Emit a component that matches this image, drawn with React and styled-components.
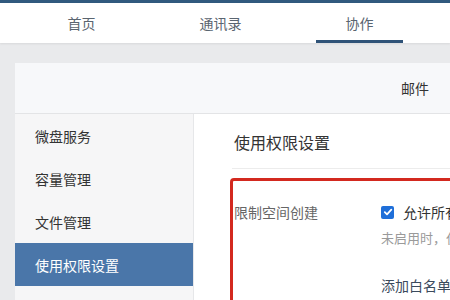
import React from "react";
import styled, { createGlobalStyle } from "styled-components";

const Global = createGlobalStyle`
  html, body { margin: 0; padding: 0; }
  body {
    width: 450px; height: 300px; overflow: hidden;
    background: #e9eaec;
    font-family: "Noto Sans CJK SC", "Noto Sans", sans-serif;
  }
`;

const TopStrip = styled.div`
  height: 3px;
  background: #315a7e;
`;

const Nav = styled.nav`
  height: 40px;
  background: #fff;
  display: flex;
  padding-left: 12px;
  box-shadow: 0 1px 2px rgba(0, 0, 0, 0.08);
  position: relative;
  z-index: 1;
`;

const Tab = styled.div`
  width: 139px;
  flex: none;
  display: flex;
  align-items: center;
  justify-content: center;
  font-size: 14px;
  color: #5a6570;
  position: relative;
  &::after {
    content: "";
    display: ${(p) => (p.$active ? "block" : "none")};
    position: absolute;
    bottom: 0;
    left: 26px;
    width: 87px;
    height: 3px;
    background: #2f5378;
  }
`;

const Main = styled.main`
  padding: 20px 0 0 15px;
`;

const Card = styled.section`
  width: 900px;
  background: #fff;
  border-radius: 2px;
`;

const CardHeader = styled.header`
  height: 50px;
  background: #f7f8fa;
  border-bottom: 1px solid #e3e4e6;
  display: flex;
  align-items: center;
  padding-left: 386px;
  font-size: 14px;
  color: #333;
`;

const Body = styled.div`
  display: flex;
  height: 400px;
`;

const Sidebar = styled.aside`
  width: 178px;
  flex: none;
  background: #f6f6f7;
  border-right: 1px solid #e6e7e9;
`;

const MenuItem = styled.div`
  height: 43px;
  display: flex;
  align-items: center;
  padding-left: 20px;
  font-size: 14px;
  color: ${(p) => (p.$active ? "#fff" : "#333")};
  background: ${(p) => (p.$active ? "#4a76a9" : "transparent")};
`;

const Content = styled.div`
  flex: 1;
  padding: 16px 0 0 40px;
`;

const Title = styled.h2`
  margin: 0;
  font-size: 16px;
  font-weight: normal;
  color: #333;
  line-height: 24px;
  padding-bottom: 14px;
  border-bottom: 1px solid #ececec;
  margin-left: -2px;
  padding-left: 2px;
`;

const Highlight = styled.div`
  margin-top: 9px;
  margin-left: -4px;
  border: 3px solid #d3291f;
  border-radius: 4px;
  padding: 21px 0 40px 1px;
`;

const Row = styled.div`
  display: flex;
`;

const Label = styled.div`
  width: 147px;
  flex: none;
  font-size: 14px;
  color: #666;
  line-height: 20px;
`;

const Field = styled.div`
  display: flex;
  flex-direction: column;
`;

const CheckLine = styled.label`
  display: flex;
  align-items: center;
  gap: 9px;
  font-size: 14px;
  color: #333;
  line-height: 20px;
  white-space: nowrap;
`;

const Box = styled.span`
  width: 13px;
  height: 13px;
  border-radius: 2px;
  background: #1f6fd9;
  display: flex;
  align-items: center;
  justify-content: center;
`;

const Hint = styled.div`
  margin-top: 6px;
  font-size: 13px;
  color: #9a9a9a;
  white-space: nowrap;
`;

const AddLink = styled.div`
  margin-top: 28px;
  font-size: 14px;
  color: #3b4a5c;
  white-space: nowrap;
`;

export default function App() {
  return (
    <>
      <Global />
      <TopStrip />
      <Nav>
        <Tab>首页</Tab>
        <Tab>通讯录</Tab>
        <Tab $active>协作</Tab>
      </Nav>
      <Main>
        <Card>
          <CardHeader>邮件</CardHeader>
          <Body>
            <Sidebar>
              <MenuItem>微盘服务</MenuItem>
              <MenuItem>容量管理</MenuItem>
              <MenuItem>文件管理</MenuItem>
              <MenuItem $active>使用权限设置</MenuItem>
              <MenuItem>操作日志</MenuItem>
            </Sidebar>
            <Content>
              <Title>使用权限设置</Title>
              <Highlight>
                <Row>
                  <Label>限制空间创建</Label>
                  <Field>
                    <CheckLine>
                      <Box>
                        <svg width="10" height="10" viewBox="0 0 10 10">
                          <path d="M1.8 5.2 L4 7.3 L8.3 2.6" fill="none" stroke="#fff" strokeWidth="1.8" strokeLinecap="round" strokeLinejoin="round" />
                        </svg>
                      </Box>
                      允许所有成员创建共享空间
                    </CheckLine>
                    <Hint>未启用时，仅管理员可创建共享空间</Hint>
                    <AddLink>添加白名单成员</AddLink>
                  </Field>
                </Row>
              </Highlight>
            </Content>
          </Body>
        </Card>
      </Main>
    </>
  );
}
